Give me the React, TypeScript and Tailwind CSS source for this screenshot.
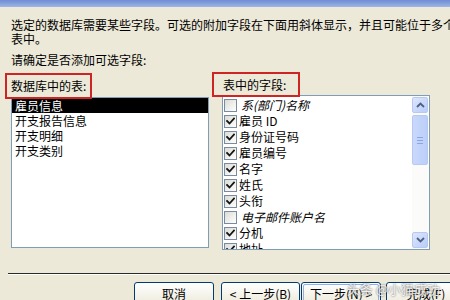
import React from "react";

const font = { fontFamily: '"Noto Sans CJK SC", "Noto Sans", sans-serif' };

function Checkbox({ checked }: { checked: boolean }) {
  return (
    <div className="w-[13px] h-[13px] shrink-0 border border-[#7b8b9f] bg-gradient-to-br from-[#dcdcd6] to-white flex items-center justify-center">
      {checked && (
        <svg width="9" height="9" viewBox="0 0 9 9">
          <path d="M1 4 L3.5 6.5 L8 1.5" stroke="#151515" strokeWidth="1.8" fill="none" strokeLinecap="square" />
        </svg>
      )}
    </div>
  );
}

function Arrow({ up }: { up: boolean }) {
  return (
    <div className="h-[16px] rounded-[2px] border border-[#b7c9f3] bg-gradient-to-br from-[#dde6fd] to-[#b9cdf8] flex items-center justify-center">
      <svg width="9" height="6" viewBox="0 0 9 6">
        <path d={up ? "M1 5 L4.5 1.5 L8 5" : "M1 1 L4.5 4.5 L8 1"} stroke="#4d6185" strokeWidth="1.8" fill="none" />
      </svg>
    </div>
  );
}

function Btn({ children, def, w }: { children: React.ReactNode; def?: boolean; w: string }) {
  return (
    <div className={`${w} h-[24px] shrink-0 rounded-[3px] border border-[#003c74] bg-gradient-to-b from-white to-[#ece9d8] p-[1px]`}>
      <div className={`h-full w-full rounded-[2px] flex items-center justify-center text-[12px] leading-[14px] text-black ${def ? "border border-[#8fb0ea]" : ""}`}>
        {children}
      </div>
    </div>
  );
}

export default function App() {
  const fields: { t: string; c: boolean; i?: boolean }[] = [
    { t: "系(部门)名称", c: false, i: true },
    { t: "雇员 ID", c: true },
    { t: "身份证号码", c: true },
    { t: "雇员编号", c: true },
    { t: "名字", c: true },
    { t: "姓氏", c: true },
    { t: "头衔", c: true },
    { t: "电子邮件账户名", c: false, i: true },
    { t: "分机", c: true },
    { t: "地址", c: true },
  ];
  const tables = ["雇员信息", "开支报告信息", "开支明细", "开支类别"];
  return (
    <div className="relative w-[450px] h-[300px] overflow-hidden bg-[#ece9d8] flex flex-col text-black" style={font}>
      <div className="h-[7px] shrink-0 bg-gradient-to-b from-[#6f8cd4] to-[#9fb5e6]" />
      <div className="mt-[11px] pl-[11px] text-[12px] leading-[14px] whitespace-nowrap">
        <div>选定的数据库需要某些字段。可选的附加字段在下面用斜体显示，并且可能位于多个</div>
        <div>表中。</div>
        <div className="mt-[7px]">请确定是否添加可选字段:</div>
      </div>
      <div className="mt-[5px] flex pl-[5px] items-start">
        <div className="w-[204px] flex flex-col mt-[1px]">
          <div className="relative z-10 w-[87px] h-[26px] border-2 border-[#cf2424] flex items-center pl-[4px] text-[12px] leading-[14px]">
            数据库中的表:
          </div>
          <div className="ml-[6px] -mt-[2px] w-[198px] h-[151px] border border-[#7f9db9] bg-white">
            {tables.map((t, i) => (
              <div
                key={t}
                className={`h-[15px] pl-[3px] flex items-center text-[12px] leading-[14px] ${i === 0 ? "bg-black text-white" : ""}`}
              >
                {t}
              </div>
            ))}
          </div>
        </div>
        <div className="ml-[3px] flex flex-col">
          <div className="relative z-10 w-[88px] h-[25px] border-2 border-[#cf2424] flex items-center pl-[9px] text-[12px] leading-[14px]">
            表中的字段:
          </div>
          <div className="ml-[10px] -mt-[2px] w-[208px] h-[155px] border border-[#7f9db9] bg-white flex overflow-hidden">
            <div className="flex-1 pt-[1px] pl-[1px] overflow-hidden">
              {fields.map((f) => (
                <div key={f.t} className="h-[16px] flex items-center gap-[2px] text-[12px] leading-[14px] whitespace-nowrap">
                  <Checkbox checked={f.c} />
                  <span className={f.i ? "italic pl-[2px]" : ""}>{f.t}</span>
                </div>
              ))}
            </div>
            <div className="w-[16px] mr-[1px] flex flex-col bg-[#fbfbf9] pt-[1px] pb-[1px]">
              <Arrow up />
              <div className="mt-[2px] h-[50px] rounded-[2px] border border-[#b7c9f3] bg-gradient-to-r from-[#c9d8fc] to-[#bccff9] flex flex-col items-center justify-center gap-[2px]">
                <div className="w-[6px] h-px bg-[#8da6dc]" />
                <div className="w-[6px] h-px bg-[#8da6dc]" />
                <div className="w-[6px] h-px bg-[#8da6dc]" />
              </div>
              <div className="flex-1" />
              <Arrow up={false} />
            </div>
          </div>
        </div>
      </div>
      <div className="mt-[23px] ml-[8px] h-px bg-[#2a2a2a] shrink-0" />
      <div className="h-px bg-white ml-[8px] shrink-0" />
      <div className="mt-[7px] flex pl-[134px]">
        <Btn w="w-[80px]">取消</Btn>
        <div className="w-[7px] shrink-0" />
        <Btn w="w-[79px]">
          &lt; 上一步(<span className="underline">B</span>)
        </Btn>
        <div className="w-[1px] shrink-0" />
        <Btn w="w-[80px]" def>
          下一步(<span className="underline">N</span>) &gt;
        </Btn>
        <div className="w-[5px] shrink-0" />
        <Btn w="w-[80px]">
          完成(<span className="underline">F</span>)
        </Btn>
      </div>
      <div className="absolute right-[10px] bottom-[4px] text-[13px] leading-[14px] text-white/85 [text-shadow:0_0_2px_#444]">
        头条 @小猫成功
      </div>
    </div>
  );
}
